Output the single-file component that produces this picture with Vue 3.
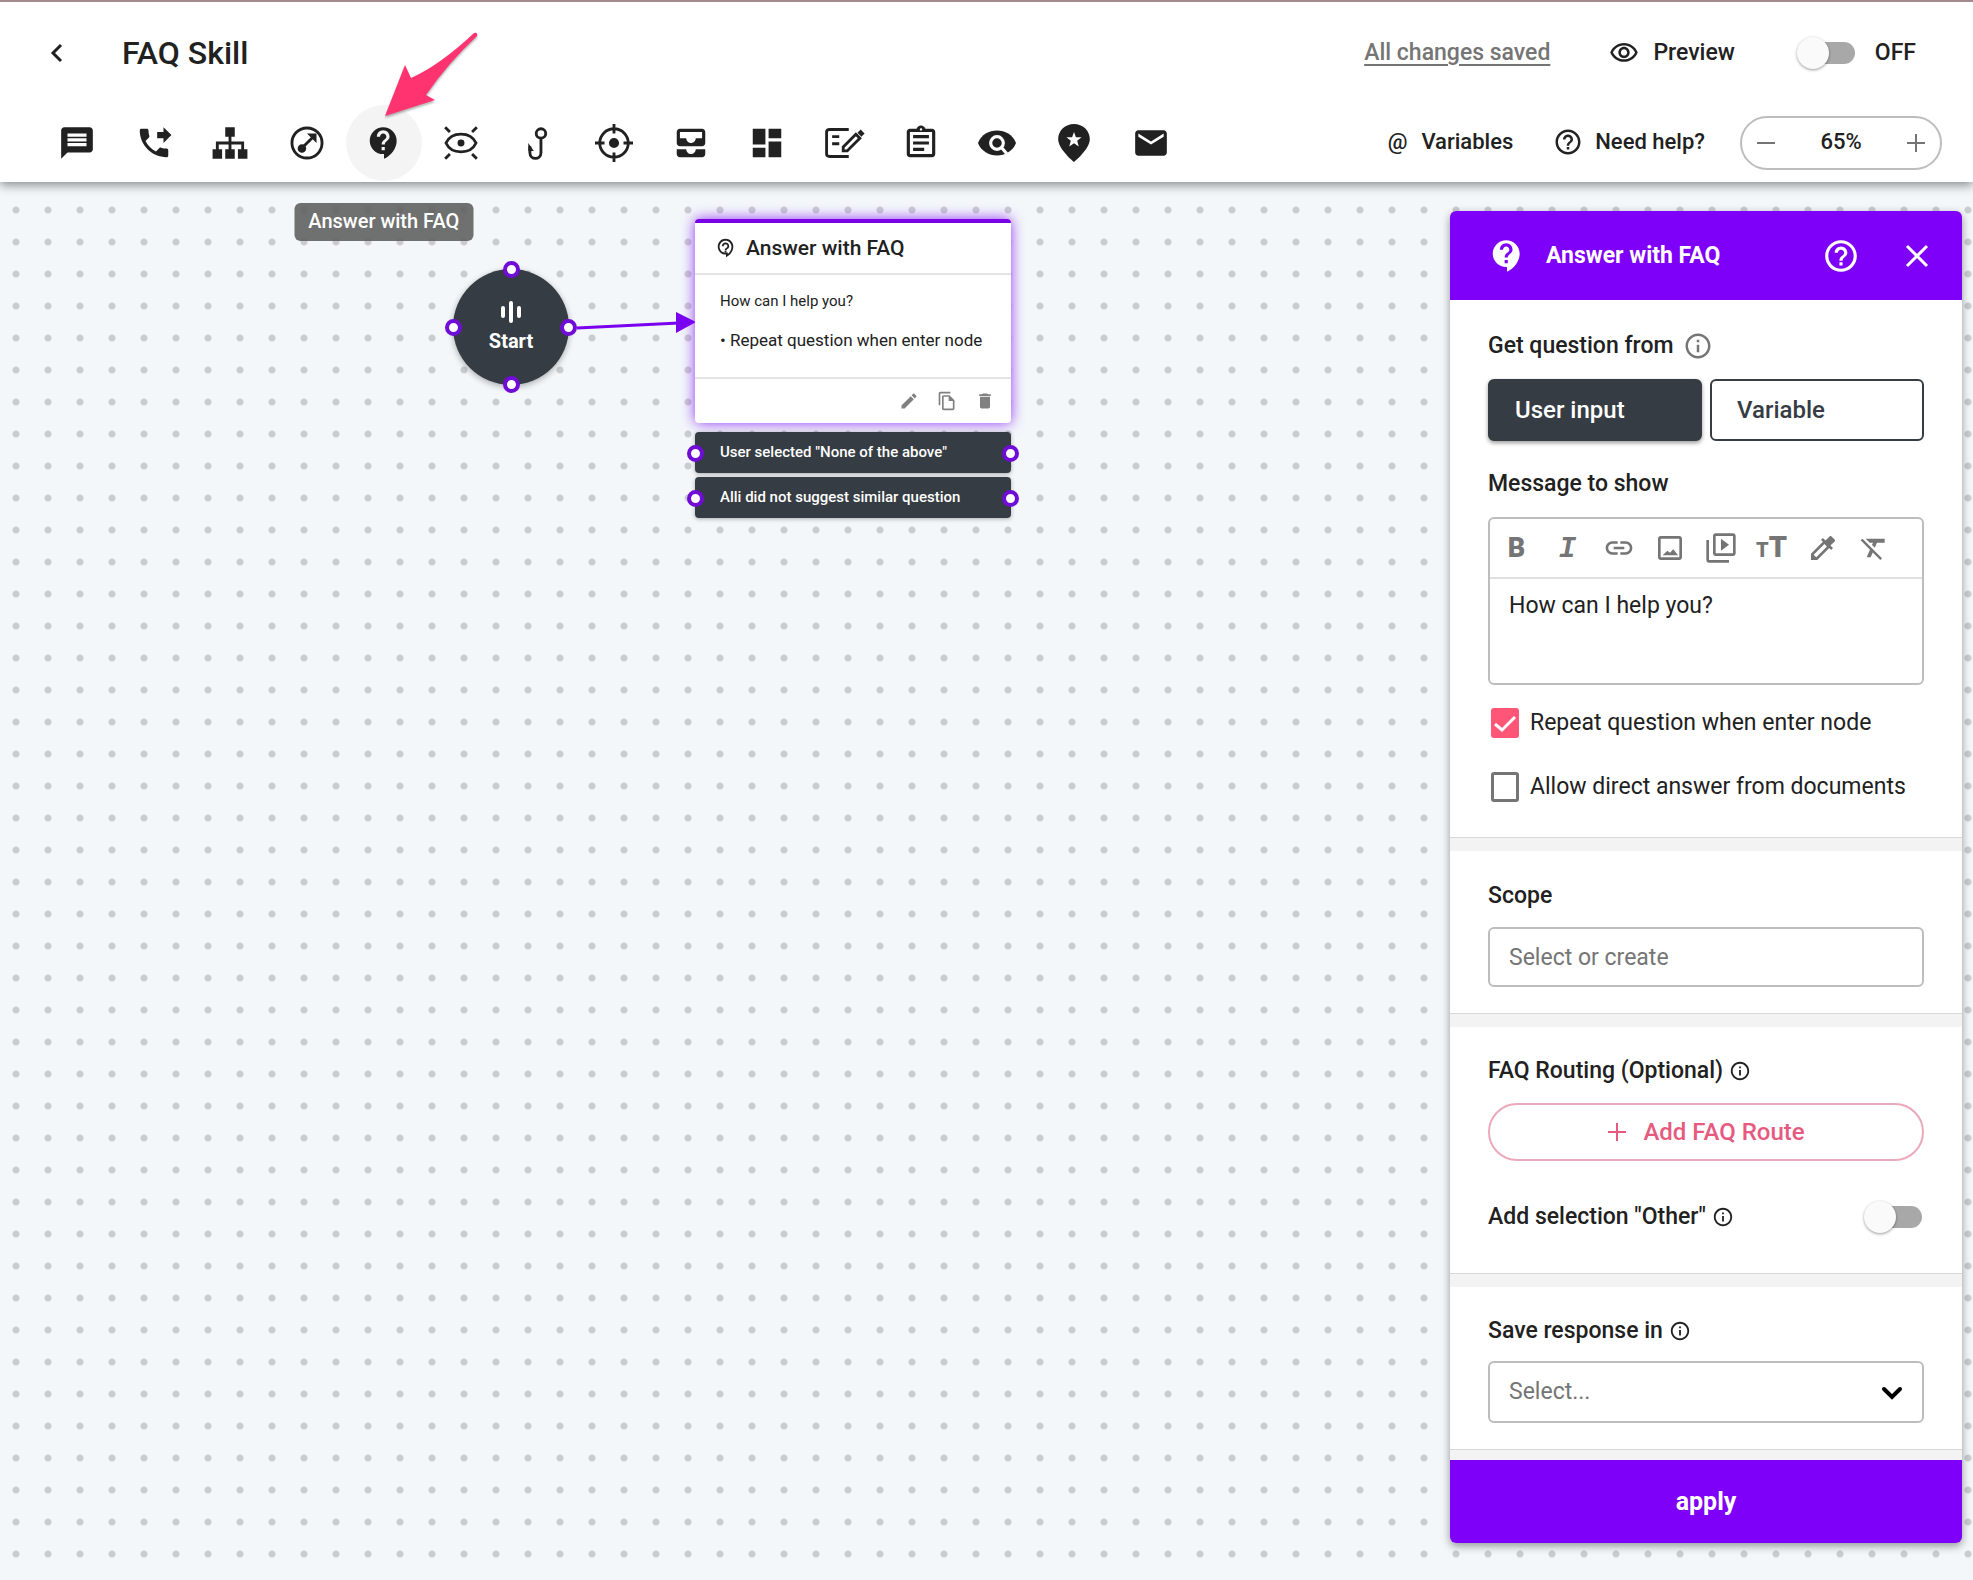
<template>
  <div class="page">
    <header class="header">
      <div class="header-row">
        <button class="icon-btn back" aria-label="Back">
          <svg width="20" height="24" viewBox="0 0 20 24"><path class="line" d="M14 4L6 12L14 20" stroke-width="3" /></svg>
        </button>
        <h1>FAQ Skill</h1>
        <div class="header-right">
          <a href="#" class="saved">All changes saved</a>
          <button class="text-btn preview">
            <svg width="30" height="30" viewBox="0 0 24 24"><path :d="icons.eye" /></svg>
            Preview
          </button>
          <label class="switch-label">
            <input v-model="enabled" type="checkbox" class="switch" />
            <span>{{ enabled ? 'ON' : 'OFF' }}</span>
          </label>
        </div>
      </div>

      <div class="toolbar-row">
        <nav class="toolbar">
          <button
            v-for="tool in tools"
            :key="tool.name"
            class="tool"
            :class="{ active: tool.name === activeTool }"
            :aria-label="tool.name"
            @click="activeTool = tool.name"
          >
            <svg width="38" height="38" viewBox="0 0 24 24">
              <path v-if="tool.fill" :d="tool.fill" fill-rule="evenodd" />
              <path v-if="tool.line" class="line" :d="tool.line" />
              <path v-if="tool.cut" class="cut" :d="tool.cut" />
            </svg>
            <span v-if="tool.name === activeTool" class="tooltip">{{ tool.name }}</span>
          </button>
        </nav>
        <div class="toolbar-right">
          <button class="text-btn"><span class="at">@</span>Variables</button>
          <button class="text-btn help">
            <svg width="30" height="30" viewBox="0 0 24 24"><path :d="icons.help" /></svg>
            Need help?
          </button>
          <div class="zoom">
            <button class="icon-btn" aria-label="Zoom out" @click="zoom -= 5">
              <svg width="20" height="20" viewBox="0 0 20 20"><path class="line" d="M1 10H19" stroke-width="2" /></svg>
            </button>
            <span>{{ zoom }}%</span>
            <button class="icon-btn" aria-label="Zoom in" @click="zoom += 5">
              <svg width="20" height="20" viewBox="0 0 20 20"><path class="line" d="M1 10H19M10 1V19" stroke-width="2" /></svg>
            </button>
          </div>
        </div>
      </div>

      <svg class="pointer" width="104" height="92" viewBox="0 0 104 92">
        <path d="M5 87L25 36L31 49Q60 36 94 4Q98 3 97 7Q68 34 46 66L55 71Z" />
      </svg>
    </header>

    <main class="canvas">
      <div class="start-node">
        <svg width="24" height="24" viewBox="0 0 24 24"><path class="line" d="M4 8V16M12 3V21M20 8V16" stroke-width="4" stroke-linecap="round" /></svg>
        <span>Start</span>
        <i v-for="side in ['top', 'right', 'bottom', 'left']" :key="side" class="port" :class="side"></i>
      </div>

      <svg class="edge" width="120" height="24" viewBox="0 0 120 24">
        <path class="line" d="M0 17L102 12" />
        <path d="M99 1L119 11L99 22Z" />
      </svg>

      <div class="faq-node">
        <article class="card">
          <h2>
            <svg width="22" height="22" viewBox="0 0 24 24"><path :d="icons.supportOutline" /></svg>
            Answer with FAQ
          </h2>
          <div class="card-body">
            <p class="question">{{ message }}</p>
            <p v-if="repeat">• Repeat question when enter node</p>
          </div>
          <div class="card-actions">
            <button v-for="action in cardActions" :key="action.name" class="icon-btn" :aria-label="action.name">
              <svg width="20" height="20" viewBox="0 0 24 24"><path :d="action.d" /></svg>
            </button>
          </div>
        </article>
        <div v-for="branch in branches" :key="branch" class="branch">
          {{ branch }}
          <i class="port left"></i>
          <i class="port right"></i>
        </div>
      </div>

      <aside class="panel">
        <div class="panel-header">
          <svg width="38" height="38" viewBox="0 0 24 24"><path :d="icons.support" /></svg>
          <h2>Answer with FAQ</h2>
          <button class="icon-btn" aria-label="Help">
            <svg width="38" height="38" viewBox="0 0 24 24"><path :d="icons.help" /></svg>
          </button>
          <button class="icon-btn" aria-label="Close">
            <svg width="38" height="38" viewBox="0 0 38 38"><path class="line" d="M9 9L29 29M29 9L9 29" stroke-width="3" /></svg>
          </button>
        </div>

        <section class="section first">
          <h3>
            Get question from
            <svg class="info-muted" width="30" height="30" viewBox="0 0 24 24"><path :d="icons.info" /></svg>
          </h3>
          <div class="choices">
            <button
              v-for="option in ['User input', 'Variable']"
              :key="option"
              :class="{ selected: source === option }"
              @click="source = option"
            >
              {{ option }}
            </button>
          </div>

          <label for="message" class="title message-title">Message to show</label>
          <div class="editor">
            <div class="editor-tools">
              <button class="bold" aria-label="Bold">B</button>
              <button class="italic" aria-label="Italic">I</button>
              <button v-for="tool in insertTools" :key="tool.name" :aria-label="tool.name">
                <svg width="32" height="32" viewBox="0 0 24 24"><path :d="tool.d" /></svg>
              </button>
              <button class="size" aria-label="Text size"><small>T</small>T</button>
              <button v-for="tool in formatTools" :key="tool.name" :aria-label="tool.name">
                <svg width="32" height="32" viewBox="0 0 24 24"><path :d="tool.d" /></svg>
              </button>
            </div>
            <textarea id="message" v-model="message"></textarea>
          </div>

          <label class="check">
            <input v-model="repeat" type="checkbox" />
            <svg v-if="repeat" width="28" height="28" viewBox="0 0 28 28"><path class="line" d="M4 15L11 21L24 8" stroke-width="3" /></svg>
            <span>Repeat question when enter node</span>
          </label>
          <label class="check">
            <input v-model="allowDirect" type="checkbox" />
            <svg v-if="allowDirect" width="28" height="28" viewBox="0 0 28 28"><path class="line" d="M4 15L11 21L24 8" stroke-width="3" /></svg>
            <span>Allow direct answer from documents</span>
          </label>
        </section>

        <section class="section">
          <label for="scope" class="title">Scope</label>
          <input id="scope" type="text" class="field" placeholder="Select or create" />
        </section>

        <section class="section routing">
          <h3>
            FAQ Routing (Optional)
            <svg width="22" height="22" viewBox="0 0 24 24"><path :d="icons.info" /></svg>
          </h3>
          <button class="add-route">
            <svg width="20" height="20" viewBox="0 0 20 20"><path class="line" d="M1 10H19M10 1V19" stroke-width="2" /></svg>
            Add FAQ Route
          </button>
          <label class="other">
            <span class="title">
              Add selection "Other"
              <svg width="22" height="22" viewBox="0 0 24 24"><path :d="icons.info" /></svg>
            </span>
            <input v-model="addOther" type="checkbox" class="switch" />
          </label>
        </section>

        <section class="section last">
          <label for="save" class="title">
            Save response in
            <svg width="22" height="22" viewBox="0 0 24 24"><path :d="icons.info" /></svg>
          </label>
          <div class="select">
            <select id="save" class="field">
              <option>Select...</option>
            </select>
            <svg width="20" height="12" viewBox="0 0 20 12"><path class="line" d="M2 2L10 10L18 2" stroke-width="4" stroke-linecap="round" /></svg>
          </div>
        </section>

        <button class="apply">apply</button>
      </aside>
    </main>
  </div>
</template>

<script setup>
import { ref } from 'vue';

const enabled = ref(false);
const zoom = ref(65);
const activeTool = ref('Answer with FAQ');
const source = ref('User input');
const message = ref('How can I help you?');
const repeat = ref(true);
const allowDirect = ref(false);
const addOther = ref(false);

const branches = ['User selected "None of the above"', 'Alli did not suggest similar question'];

const icons = {
  eye: 'M12 6c3.79 0 7.17 2.13 8.82 5.5C19.17 14.87 15.79 17 12 17s-7.17-2.13-8.82-5.5C4.83 8.13 8.21 6 12 6m0-2C7 4 2.73 7.11 1 11.5 2.73 15.89 7 19 12 19s9.27-3.11 11-7.5C21.27 7.11 17 4 12 4zm0 5c1.38 0 2.5 1.12 2.5 2.5S13.38 14 12 14s-2.5-1.12-2.5-2.5S10.62 9 12 9m0-2c-2.48 0-4.5 2.02-4.5 4.5S9.52 16 12 16s4.5-2.02 4.5-4.5S14.48 7 12 7z',
  help: 'M11 18h2v-2h-2v2zm1-16C6.48 2 2 6.48 2 12s4.48 10 10 10 10-4.48 10-10S17.52 2 12 2zm0 18c-4.41 0-8-3.59-8-8s3.59-8 8-8 8 3.59 8 8-3.59 8-8 8zm0-14c-2.21 0-4 1.79-4 4h2c0-1.1.9-2 2-2s2 .9 2 2c0 2-3 1.75-3 5h2c0-2.25 3-2.5 3-5 0-2.21-1.79-4-4-4z',
  info: 'M11 7h2v2h-2zm0 4h2v6h-2zm1-9C6.48 2 2 6.48 2 12s4.48 10 10 10 10-4.48 10-10S17.52 2 12 2zm0 18c-4.41 0-8-3.59-8-8s3.59-8 8-8 8 3.59 8 8-3.59 8-8 8z',
  support: 'M11.5 2C6.81 2 3 5.81 3 10.5S6.81 19 11.5 19h.5v3c4.86-2.34 8-7 8-11.5C20 5.81 16.19 2 11.5 2zm1 14.5h-2v-2h2v2zm.4-4.82c-.3.41-.4.72-.4 1.32h-2c0-3.25 3-3 3-5 0-1.1-.9-2-2-2s-2 .9-2 2h-2c0-2.21 1.79-4 4-4s4 1.79 4 4c0 1.8-1.6 2.4-2.6 3.68z',
  supportOutline: 'M11.5 2C6.81 2 3 5.81 3 10.5S6.81 19 11.5 19h.5v3c4.86-2.34 8-7 8-11.5C20 5.81 16.19 2 11.5 2zm2.5 16.59V17h-2.5C7.92 17 5 14.08 5 10.5S7.92 4 11.5 4 18 6.92 18 10.5c0 3.02-1.69 6.02-4 8.09zm-3.5-4.09h2v2h-2zm1-8.5c-2.21 0-4 1.79-4 4h2c0-1.1.9-2 2-2s2 .9 2 2c0 2-3 1.75-3 5h2c0-2.25 3-2.5 3-5 0-2.21-1.79-4-4-4z'
};

const tools = [
  { name: 'Send message', fill: 'M20 2H4c-1.1 0-2 .9-2 2v18l4-4h14c1.1 0 2-.9 2-2V4c0-1.1-.9-2-2-2zM6 6h12v2H6zM6 9h12v2H6zM6 12h12v2H6z' },
  { name: 'Transfer', fill: 'M18 12l5-5-5-5v3h-4v4h4v3zm2 3.5c-1.25 0-2.45-.2-3.57-.57-.35-.11-.74-.03-1.02.24l-2.2 2.2c-2.83-1.44-5.15-3.75-6.59-6.59l2.2-2.21c.28-.26.36-.65.25-1C8.7 6.45 8.5 5.25 8.5 4c0-.55-.45-1-1-1H4c-.55 0-1 .45-1 1 0 9.39 7.61 17 17 17 .55 0 1-.45 1-1v-3.5c0-.55-.45-1-1-1z' },
  { name: 'Conditions', fill: 'M9 2h6v6h-6zM1 16h6v6h-6zM9 16h6v6h-6zM17 16h6v6h-6z', line: 'M4 17V12H20V17M12 7V17' },
  { name: 'Jump', fill: 'M18 6V12L12 6ZM11.5 15.5a2.7 2.7 0 1 1-5.4 0a2.7 2.7 0 1 1 5.4 0z', line: 'M21.5 12A9.5 9.5 0 1 1 2.5 12A9.5 9.5 0 1 1 21.5 12M8.5 15.5L16 8' },
  { name: 'Answer with FAQ', fill: icons.support },
  { name: 'Observe', fill: 'M14.2 12a2.2 2.2 0 1 1-4.4 0a2.2 2.2 0 1 1 4.4 0z', line: 'M2.5 12C6 4.5 18 4.5 21.5 12C18 19.5 6 19.5 2.5 12ZM2 2L5 5M22 2L19 5M2 22L5 19M22 22L19 19' },
  { name: 'Webhook', fill: 'M6.5 12V17H10z', line: 'M17.5 6A3 3 0 1 1 11.5 6A3 3 0 1 1 17.5 6M14.5 9V18C14.5 23 7.5 23 7.5 18V14' },
  { name: 'Set target', fill: 'M15.2 12a3.2 3.2 0 1 1-6.4 0a3.2 3.2 0 1 1 6.4 0z', line: 'M21 12A9 9 0 1 1 3 12A9 9 0 1 1 21 12M12 0V6M12 18V24M0 12H6M18 12H24' },
  { name: 'Collect', fill: 'M19 3H5c-1.1 0-2 .9-2 2v7c0 1.1.9 2 2 2h14c1.1 0 2-.9 2-2V5c0-1.1-.9-2-2-2zm0 6h-4c0 1.62-1.38 3-3 3s-3-1.38-3-3H5V5h14v4zm-4 7h6v3c0 1.1-.9 2-2 2H5c-1.1 0-2-.9-2-2v-3h6c0 1.66 1.34 3 3 3s3-1.34 3-3z' },
  { name: 'Carousel', fill: 'M3 13h8V3H3v10zm0 8h8v-6H3v6zm10 0h8V11h-8v10zm0-18v6h8V3h-8z' },
  { name: 'Fill in form', fill: 'M20.5 5.5L22.5 3.5L25 6L23 8z', line: 'M15 3.5H3C1.5 3.5 1 4 1 5V19C1 20 1.5 20.5 3 20.5H15M4.5 8H9M4.5 12.5H9M11.5 14.5L19.5 6.5L22 9L14 17H11.5Z' },
  { name: 'Survey', fill: 'M19 3h-4.18C14.4 1.84 13.3 1 12 1s-2.4.84-2.82 2H5c-1.1 0-2 .9-2 2v14c0 1.1.9 2 2 2h14c1.1 0 2-.9 2-2V5c0-1.1-.9-2-2-2zm-7-.25c.41 0 .75.34.75.75s-.34.75-.75.75-.75-.34-.75-.75.34-.75.75-.75zM19 19H5V5h14v14zM7 7h10v2H7zM7 11h10v2H7zM7 15h7v2H7z' },
  { name: 'Search', fill: 'M0 12C4 1.5 20 1.5 24 12C20 22.5 4 22.5 0 12Z', cut: 'M16 12A4 4 0 1 1 8 12A4 4 0 1 1 16 12M15 15L20 21' },
  { name: 'Mark goal', fill: 'M12 0C6.5 0 2 4.2 2 9.5C2 16 12 24 12 24S22 16 22 9.5C22 4.2 17.5 0 12 0zM12 5L13.2 8.4H16.8L14 10.6L15 14.2L12 12.1L9 14.2L10 10.6L7.2 8.4H10.8z' },
  { name: 'Send email', fill: 'M20 4H4c-1.1 0-2 .9-2 2v12c0 1.1.9 2 2 2h16c1.1 0 2-.9 2-2V6c0-1.1-.9-2-2-2zm0 4l-8 5-8-5V6l8 5 8-5v2z' }
];

const cardActions = [
  { name: 'Edit', d: 'M3 17.25V21h3.75L17.81 9.94l-3.75-3.75L3 17.25zM20.71 7.04c.39-.39.39-1.02 0-1.41l-2.34-2.34c-.39-.39-1.02-.39-1.41 0l-1.83 1.83 3.75 3.75 1.83-1.83z' },
  { name: 'Duplicate', d: 'M16 1H4c-1.1 0-2 .9-2 2v14h2V3h12V1zm-1 4H8c-1.1 0-2 .9-2 2v14c0 1.1.9 2 2 2h11c1.1 0 2-.9 2-2V11l-6-6zM8 21V7h6v5h5v9H8z' },
  { name: 'Delete', d: 'M6 19c0 1.1.9 2 2 2h8c1.1 0 2-.9 2-2V7H6v12zM19 4h-3.5l-1-1h-5l-1 1H5v2h14V4z' }
];

const insertTools = [
  { name: 'Link', d: 'M3.9 12c0-1.71 1.39-3.1 3.1-3.1h4V7H7c-2.76 0-5 2.24-5 5s2.24 5 5 5h4v-1.9H7c-1.71 0-3.1-1.39-3.1-3.1zM8 13h8v-2H8v2zm9-6h-4v1.9h4c1.71 0 3.1 1.39 3.1 3.1s-1.39 3.1-3.1 3.1h-4V17h4c2.76 0 5-2.24 5-5s-2.24-5-5-5z' },
  { name: 'Image', d: 'M19 5v14H5V5h14m0-2H5c-1.1 0-2 .9-2 2v14c0 1.1.9 2 2 2h14c1.1 0 2-.9 2-2V5c0-1.1-.9-2-2-2zm-4.5 10l-2.5 2.5L10 14l-3.5 3.5h11.5z' },
  { name: 'Video', d: 'M3 6H1v15c0 1.1.9 2 2 2h15v-2H3V6zM21 1H8c-1.1 0-2 .9-2 2v13c0 1.1.9 2 2 2h13c1.1 0 2-.9 2-2V3c0-1.1-.9-2-2-2zm0 15H8V3h13v13zM12 5v9l6-4.5z' }
];

const formatTools = [
  { name: 'Text color', d: 'M20.71 5.63l-2.34-2.34c-.39-.39-1.02-.39-1.41 0l-3.12 3.12-1.93-1.91-1.41 1.41 1.42 1.42L3 16.25V21h4.75l8.92-8.92 1.42 1.42 1.41-1.41-1.92-1.92 3.12-3.12c.4-.4.4-1.03.01-1.42zM6.92 19L5 17.08l8.06-8.06 1.92 1.92L6.92 19z' },
  { name: 'Clear format', d: 'M3.27 5L2 6.27l6.97 6.97L6.5 19h3l1.57-3.66L16.73 21 18 19.73 3.55 5.27 3.27 5zM6 5v.18L8.82 8h2.4l-.72 1.68 2.1 2.1L14.21 8H20V5H6z' }
];
</script>

<style>
body {
  margin: 0;
}
</style>

<style scoped>
.page {
  min-height: 100vh;
  display: flex;
  flex-direction: column;
  color: #212121;
  font-family: Roboto, sans-serif;
  font-size: 22px;
  line-height: 32px;
}

.page * {
  box-sizing: border-box;
}

button,
input,
select,
textarea {
  margin: 0;
  color: inherit;
  font: inherit;
}

button {
  padding: 0;
  border: none;
  background: none;
  cursor: pointer;
}

h1,
h2,
h3,
p {
  margin: 0;
}

svg {
  display: block;
  flex: none;
  overflow: visible;
  fill: currentColor;
}

.line {
  fill: none;
  stroke: currentColor;
}

.icon-btn {
  display: flex;
}

/* header */
.header {
  position: relative;
  z-index: 1;
  border-top: 2px solid #a38b8b;
  background: #fff;
  box-shadow: 0 3px 10px rgba(0, 0, 0, 0.45);
}

.header-row {
  display: flex;
  align-items: center;
  height: 101px;
  padding: 0 57px 0 47px;
}

h1 {
  margin-left: 55px;
  font-size: 32px;
  font-weight: 500;
}

.header-right,
.toolbar-right {
  display: flex;
  align-items: center;
  margin-left: auto;
  font-weight: 500;
}

.header-right {
  font-size: 23px;
}

.saved {
  color: #757575;
  text-decoration: underline;
  text-underline-offset: 4px;
}

.text-btn {
  display: flex;
  align-items: center;
  gap: 14px;
  font-weight: 500;
}

.preview {
  margin-left: 59px;
}

.switch-label {
  display: flex;
  align-items: center;
  gap: 20px;
  margin-left: 62px;
}

.switch {
  appearance: none;
  position: relative;
  width: 58px;
  height: 22px;
  border-radius: 11px;
  background: linear-gradient(#a8a8a8, #a8a8a8) right / 46px 100% no-repeat;
}

.switch::before {
  content: '';
  position: absolute;
  left: 0;
  top: -5px;
  width: 32px;
  height: 32px;
  border-radius: 50%;
  background: #fafafa;
  box-shadow: 0 1px 3px rgba(0, 0, 0, 0.4);
}

.switch:checked::before {
  left: 26px;
}

.toolbar-row {
  display: flex;
  align-items: center;
  height: 79px;
  padding: 0 31px 0 39px;
}

.toolbar {
  display: flex;
  flex: 0 1 1150px;
  justify-content: space-between;
}

.tool {
  position: relative;
  display: flex;
  align-items: center;
  justify-content: center;
  width: 76px;
  height: 76px;
  border-radius: 50%;
}

.tool.active {
  background: #f4f4f4;
}

.tool .line {
  stroke-width: 1.8;
}

.cut {
  fill: none;
  stroke: #fff;
  stroke-width: 2;
}

.tooltip {
  position: absolute;
  left: 50%;
  top: 98px;
  padding: 2px 14px 4px;
  border-radius: 6px;
  background: rgba(97, 97, 97, 0.9);
  color: #fff;
  font-size: 20px;
  font-weight: 500;
  white-space: nowrap;
  transform: translateX(-50%);
}

.toolbar-right .text-btn,
.zoom span {
  padding-bottom: 2px;
}

.help {
  gap: 12px;
  margin-left: 40px;
}

.zoom {
  display: flex;
  align-items: center;
  justify-content: space-between;
  width: 202px;
  height: 54px;
  margin-left: 35px;
  padding: 0 14px;
  border: 2px solid #bdbdbd;
  border-radius: 27px;
}

.zoom svg {
  color: #757575;
}

.pointer {
  position: absolute;
  left: 380px;
  top: 27px;
  color: #ff3370;
  filter: drop-shadow(0 2px 1px rgba(0, 0, 0, 0.3));
  pointer-events: none;
}

/* canvas */
.canvas {
  position: relative;
  flex: 1;
  display: flex;
  align-items: flex-start;
  justify-content: flex-end;
  padding: 29px 11px 37px;
  background: radial-gradient(circle, #cacdd0 3px, transparent 4px) 0 12px / 32px 32px #f3f7fa;
}

.start-node {
  position: absolute;
  left: 453px;
  top: 87px;
  display: flex;
  flex-direction: column;
  align-items: center;
  gap: 1px;
  width: 116px;
  height: 116px;
  padding-top: 31px;
  border-radius: 50%;
  background: #363c43;
  box-shadow: 0 2px 6px rgba(0, 0, 0, 0.3);
  color: #fff;
  font-size: 20px;
  font-weight: 700;
}

.port {
  position: absolute;
  width: 17px;
  height: 17px;
  border: 4px solid #6f0cd6;
  border-radius: 50%;
  background: #fff;
}

.port.left,
.port.right {
  top: calc(50% - 8px);
}

.port.top,
.port.bottom {
  left: calc(50% - 8px);
}

.port.left {
  left: -8px;
}

.port.right {
  right: -8px;
}

.port.top {
  top: -8px;
}

.port.bottom {
  bottom: -8px;
}

.edge {
  position: absolute;
  left: 577px;
  top: 129px;
  color: #7a00f0;
}

.edge .line {
  stroke-width: 3;
}

.faq-node {
  position: absolute;
  left: 695px;
  top: 37px;
  width: 316px;
}

.card {
  margin-bottom: 9px;
  border-top: 4px solid #7a00e6;
  border-radius: 4px;
  background: #fff;
  box-shadow: 0 0 14px rgba(122, 0, 240, 0.8);
}

.card h2 {
  display: flex;
  align-items: center;
  gap: 9px;
  height: 52px;
  padding: 0 20px;
  border-bottom: 2px solid #e4e4e4;
  font-size: 21px;
  font-weight: 500;
}

.card-body {
  height: 102px;
  padding: 10px 25px 0;
  font-size: 17px;
}

.card-body p {
  margin-bottom: 7px;
  white-space: nowrap;
}

.card-body .question {
  font-size: 15px;
}

.card-actions {
  display: flex;
  align-items: center;
  justify-content: flex-end;
  gap: 18px;
  height: 46px;
  padding: 0 16px;
  border-top: 2px solid #e4e4e4;
  color: #808080;
}

.branch {
  position: relative;
  height: 41px;
  margin-bottom: 4px;
  padding: 0 25px;
  border-radius: 4px;
  background: #363c43;
  box-shadow: 0 1px 4px rgba(0, 0, 0, 0.3);
  color: #fff;
  font-size: 15px;
  font-weight: 500;
  line-height: 41px;
  white-space: nowrap;
}

/* side panel */
.panel {
  position: relative;
  width: 512px;
  border-radius: 6px;
  background: #fff;
  box-shadow: 0 3px 8px rgba(0, 0, 0, 0.4);
}

.panel-header {
  display: flex;
  align-items: center;
  height: 89px;
  padding: 0 26px 0 38px;
  border-radius: 6px 6px 0 0;
  background: #7f00f8;
  color: #fff;
}

.panel-header h2 {
  margin: 0 auto 0 20px;
  font-size: 23px;
  font-weight: 700;
}

.panel-header .icon-btn + .icon-btn {
  margin-left: 38px;
}

.section {
  display: flex;
  flex-direction: column;
  padding: 29px 38px 40px;
  box-shadow: inset 0 -13px #f3f3f3, inset 0 -14px #d8d8d8;
}

.section h3,
.title {
  display: flex;
  align-items: center;
  gap: 6px;
  margin-bottom: 15px;
  font-size: 23px;
  font-weight: 500;
}

.section.first {
  padding-top: 30px;
  padding-bottom: 48px;
}

.section.first h3,
.section.first .title {
  gap: 10px;
  margin-bottom: 17px;
}

.info-muted {
  color: #757575;
}

.choices {
  display: grid;
  grid-template-columns: 1fr 1fr;
  gap: 8px;
}

.choices button {
  height: 62px;
  padding: 0 25px;
  border: 2px solid #363c43;
  border-radius: 6px;
  color: #363c43;
  font-size: 24px;
  font-weight: 500;
  text-align: left;
}

.choices .selected {
  background: #363c43;
  box-shadow: 0 2px 4px rgba(0, 0, 0, 0.4);
  color: #fff;
}

.message-title {
  margin-top: 27px;
}

.editor {
  border: 2px solid #bdbdbd;
  border-radius: 6px;
}

.editor-tools {
  display: flex;
  align-items: center;
  height: 60px;
  padding: 0 1px;
  border-bottom: 2px solid #e0e0e0;
  color: #757575;
}

.editor-tools button {
  display: flex;
  align-items: baseline;
  justify-content: center;
  width: 51px;
}

.editor-tools .bold {
  font-size: 27px;
  font-weight: 900;
}

.editor-tools .italic {
  padding-top: 4px;
  font-family: 'Liberation Mono', monospace;
  font-size: 29px;
  font-style: italic;
  font-weight: 700;
}

.editor-tools .size {
  font-size: 29px;
  font-weight: 900;
}

.editor-tools small {
  font-size: 20px;
}

textarea {
  display: block;
  width: 100%;
  height: 104px;
  padding: 11px 19px;
  border: none;
  background: none;
  outline: none;
  resize: none;
  font-size: 23px;
}

.check {
  position: relative;
  display: flex;
  align-items: center;
  gap: 11px;
  margin: 22px 0 10px 3px;
  font-size: 23px;
  white-space: nowrap;
}

.check + .check {
  margin-bottom: 0;
}

.check input {
  appearance: none;
  flex: none;
  width: 28px;
  height: 30px;
  border: 3px solid #757575;
  border-radius: 3px;
}

.check input:checked {
  border-color: #ff5577;
  background: #ff5577;
}

.check svg {
  position: absolute;
  left: 0;
  color: #fff;
}

.field {
  width: 100%;
  height: 60px;
  padding: 0 19px;
  border: 2px solid #bdbdbd;
  border-radius: 6px;
  background: #fff;
  color: #757575;
  font-size: 23px;
}

.field::placeholder {
  color: #757575;
}

.section.routing {
  padding-top: 28px;
  padding-bottom: 54px;
}

.add-route {
  display: flex;
  align-items: center;
  justify-content: center;
  gap: 16px;
  height: 58px;
  margin-top: 1px;
  border: 2px solid #eba9bc;
  border-radius: 29px;
  color: #e65a80;
  font-size: 24px;
  font-weight: 500;
}

.other {
  display: flex;
  align-items: center;
  justify-content: space-between;
  margin-top: 40px;
  padding-right: 2px;
}

.other .title {
  margin: 0;
}

.section.last {
  padding-top: 28px;
  padding-bottom: 37px;
  box-shadow: inset 0 -10px #f3f3f3, inset 0 -11px #d8d8d8;
}

.section.last .title {
  margin-bottom: 14px;
}

.select {
  position: relative;
}

.select select {
  appearance: none;
  height: 62px;
}

.select svg {
  position: absolute;
  right: 22px;
  top: 26px;
  color: #000;
  pointer-events: none;
}

.apply {
  display: block;
  width: 100%;
  height: 83px;
  border-radius: 0 0 6px 6px;
  background: #7f00f8;
  color: #fff;
  font-size: 25px;
  font-weight: 700;
}
</style>
